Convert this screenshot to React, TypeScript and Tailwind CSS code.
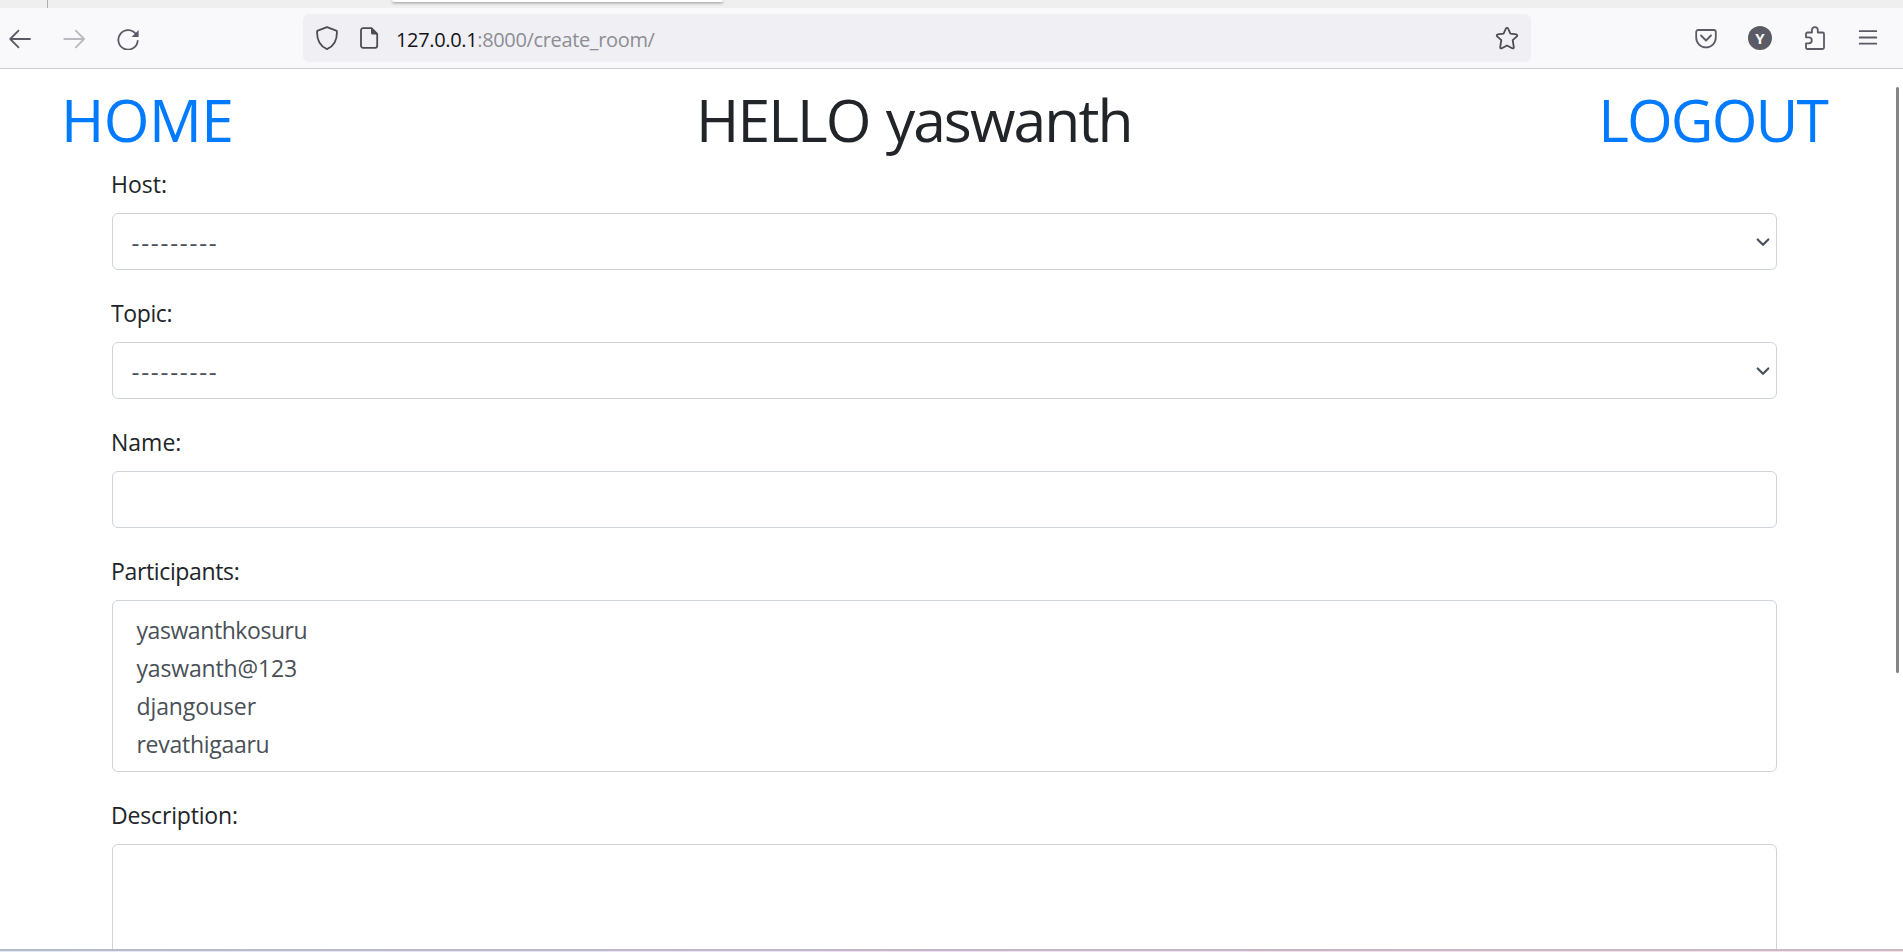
import type { ReactNode } from "react";

function Icon({ className = "", children }: { className?: string; children: ReactNode }) {
  return (
    <svg
      viewBox="0 0 24 24"
      className={`size-6 shrink-0 ${className}`}
      fill="none"
      stroke="currentColor"
      strokeWidth="1.8"
      strokeLinecap="round"
      strokeLinejoin="round"
    >
      {children}
    </svg>
  );
}

function TabStrip() {
  return (
    <div className="flex h-2 shrink-0 items-start overflow-hidden bg-[#efefef]">
      <div className="ml-[47px] h-2 w-px bg-[#b0b0b2]" />
      <div className="ml-[344px] h-[2px] w-[331px] rounded-b-[4px] bg-white shadow-[0_1px_3px_rgba(0,0,0,0.45)]" />
    </div>
  );
}

function Toolbar() {
  return (
    <div className="flex h-[61px] shrink-0 items-center border-b border-[#cccccf] bg-[#f9f9fb] pl-2 text-[#5b5b66]">
      <Icon>
        <path d="M22 13H2.2M10.5 4.7 2.2 13l8.3 8.3" />
      </Icon>
      <Icon className="ml-[30px] text-[#b9b9bf]">
        <path d="M2.3 13h19.8M13.8 4.7l8.3 8.3-8.3 8.3" />
      </Icon>
      <Icon className="ml-[30px]">
        <path d="M20.2 8.6A9.7 9.7 0 1 0 21.7 14.8" />
        <path d="M22.6 3.9v7h-7z" fill="currentColor" stroke="none" />
      </Icon>

      <div className="ml-[163px] flex h-12 w-[1228px] items-center rounded-[6px] bg-[#f0f0f4] px-3 text-[#4c4c52]">
        <Icon>
          <path d="M12 1.1 21.2 4.6Q22 5 22 5.8C22 13.5 19.5 20.2 12 23.1 4.5 20.2 2 13.5 2 5.8Q2 5 2.8 4.6z" />
        </Icon>
        <Icon className="ml-[18px]">
          <path d="M6 2.2h8.5l5.7 5.8v11.8a2 2 0 0 1-2 2H6a2 2 0 0 1-2-2V4.2a2 2 0 0 1 2-2z" />
          <path d="M14 1.5v5.5a1.5 1.5 0 0 0 1.5 1.5H21z" fill="currentColor" stroke="none" />
        </Icon>
        <div className="ml-[15px] flex pt-[3px] text-[20px] leading-6 text-[#15141a]">
          <span className="tracking-[-0.35px]">127.0.0.1</span>
          <span className="tracking-[-0.35px] text-[#8d8d93]">:8000/create_room/</span>
        </div>
        <Icon className="ml-auto">
          <path d="M10.9 2.5a1.2 1.2 0 0 1 2.2 0l2.3 5.2 5.9.7a1.1 1.1 0 0 1 .6 1.9l-4.2 3.9 1.1 6.9a1.1 1.1 0 0 1-1.6 1.2L12 19.5l-5.2 2.8a1.1 1.1 0 0 1-1.6-1.2l1.1-6.9-4.2-3.9a1.1 1.1 0 0 1 .6-1.9l5.9-.7z" />
        </Icon>
      </div>

      <Icon className="ml-[163px]">
        <path d="M4.2 4h15.6a2 2 0 0 1 2 2v5.6a9.8 9.8 0 0 1-19.6 0V6a2 2 0 0 1 2-2z" />
        <path d="M7 9.5l5 5 5-5" />
      </Icon>
      <div className="ml-[30px] flex size-6 items-center justify-center rounded-full bg-[#5b5b66] text-[15px] leading-none font-bold text-[#f9f9fb]">
        Y
      </div>
      <Icon className="ml-[31px]">
        <path d="M3 11.3V8a1.5 1.5 0 0 1 1.5-1.5h4.5V4a2.9 2.9 0 0 1 5.8 0v2.5h4.7A1.5 1.5 0 0 1 21 8v13.5a1.5 1.5 0 0 1-1.5 1.5h-15A1.5 1.5 0 0 1 3 21.5v-4.2h2.8a3 3 0 0 0 0-6z" />
      </Icon>
      <Icon className="ml-[29px]">
        <path d="M3.7 5.2h16.6M3.7 11.5h16.6M3.7 17.7h16.6" />
      </Icon>
    </div>
  );
}

function Field({ label, tracking = "", children }: { label: string; tracking?: string; children: ReactNode }) {
  return (
    <div className="mb-[25px] shrink-0">
      <div className={`-ml-px mb-[11px] h-9 text-[23px] leading-9 text-[#212529] ${tracking}`}>{label}</div>
      {children}
    </div>
  );
}

function SelectBox() {
  return (
    <div className="flex h-[57px] items-center justify-between rounded-[6px] border border-[#ced4da] pr-[5px] pl-[18px] text-[#495057]">
      <span className="pt-[3px] font-['Lato',sans-serif] text-[24px] leading-9 tracking-[0.75px]">---------</span>
      <svg viewBox="0 0 16 16" className="size-4" fill="none" stroke="currentColor" strokeWidth="2.2" strokeLinecap="round" strokeLinejoin="round">
        <path d="M2.7 5.5 8 10.8l5.3-5.3" />
      </svg>
    </div>
  );
}

export default function App() {
  return (
    <div className="relative flex h-[952px] w-[1903px] flex-col overflow-hidden bg-white font-['Open_Sans','Noto_Sans',sans-serif]">
      <TabStrip />
      <Toolbar />

      <main className="flex min-h-0 flex-1 flex-col overflow-hidden">
        <header className="mt-[14px] mb-[11px] flex h-[72px] shrink-0 pr-[76px] pl-[61px] text-[58.8px] leading-[72px] whitespace-nowrap">
          <a className="w-[635px] tracking-[-0.6px] text-[#007bff]">HOME</a>
          <h1 className="flex text-[#212529]">
            <span className="tracking-[-1.9px]">HELLO</span>
            <span className="ml-[16px] tracking-[-1.95px]">yaswanth</span>
          </h1>
          <a className="ml-auto text-right tracking-[-1.9px] text-[#007bff]">LOGOUT</a>
        </header>

        <form className="mr-[126px] ml-[112px] flex min-h-0 flex-1 flex-col">
          <Field label="Host:">
            <SelectBox />
          </Field>
          <Field label="Topic:" tracking="tracking-[-0.4px]">
            <SelectBox />
          </Field>
          <Field label="Name:">
            <div className="h-[57px] rounded-[6px] border border-[#ced4da]" />
          </Field>
          <Field label="Participants:" tracking="tracking-[-0.36px]">
            <div className="flex h-[172px] flex-col rounded-[6px] border border-[#ced4da] pt-[10px] pl-[23.5px] text-[23px] leading-[38px] text-[#495057]">
              <span className="tracking-[-0.43px]">yaswanthkosuru</span>
              <span className="tracking-[-0.15px]">yaswanth@123</span>
              <span className="tracking-[-0.1px]">djangouser</span>
              <span className="tracking-[-0.28px]">revathigaaru</span>
            </div>
          </Field>
          <Field label="Description:" tracking="tracking-[-0.17px]">
            <div className="h-[200px] rounded-[6px] border border-[#ced4da]" />
          </Field>
        </form>
      </main>

      <div className="h-[2px] shrink-0 bg-linear-to-r from-[#b4bcc9] via-[#c2b8c8] to-[#cbb9c2]" />
      <div className="h-px shrink-0 bg-linear-to-r from-[#e6eaf5] via-[#f0e2f2] to-[#f8e0ea]" />

      <div className="absolute top-[87px] right-1 h-[586px] w-[3px] rounded-full bg-[#858585]" />
    </div>
  );
}
